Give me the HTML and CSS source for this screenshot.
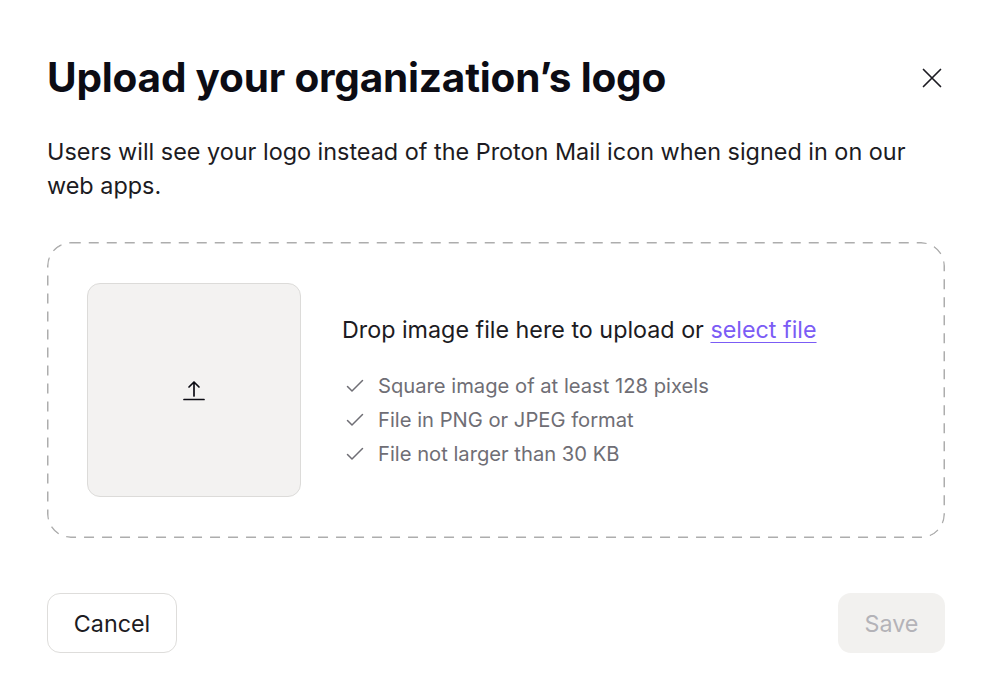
FILE: index.html
```html
<!DOCTYPE html>
<html lang="en">
<head>
<meta charset="utf-8">
<title>Upload your organization’s logo</title>
<link rel="stylesheet" href="styles.css">
</head>
<body>
<div class="modal">
  <header class="modal-header">
    <h1 class="modal-title">Upload your organization’s logo</h1>
    <button class="close-btn" aria-label="Close">
      <svg width="20" height="20" viewBox="0 0 20 20" fill="none" stroke="#1c1b22" stroke-width="1.7" stroke-linecap="round"><path d="M1.5 1.5L18.5 18.5M18.5 1.5L1.5 18.5"/></svg>
    </button>
  </header>
  <p class="modal-desc">Users will see your logo instead of the Proton Mail icon when signed in on our web apps.</p>
  <div class="dropzone">
    <div class="preview">
      <svg width="22" height="22" viewBox="0 0 22 22" fill="none" stroke="#0c0c14" stroke-width="1.7" stroke-linecap="round" stroke-linejoin="round"><path d="M11 17V3M6 8L11 3L16 8M1 20.5H21"/></svg>
    </div>
    <div class="info">
      <p class="drop-text">Drop image file here to upload or <a class="link" href="#">select file</a></p>
      <ul class="checks">
        <li><svg class="check" width="18" height="14" viewBox="0 0 18 14" fill="none" stroke="#6f6e75" stroke-width="1.5" stroke-linecap="round" stroke-linejoin="round"><path d="M1.5 7.5L6 12L16.5 1.5"/></svg>Square image of at least 128 pixels</li>
        <li><svg class="check" width="18" height="14" viewBox="0 0 18 14" fill="none" stroke="#6f6e75" stroke-width="1.5" stroke-linecap="round" stroke-linejoin="round"><path d="M1.5 7.5L6 12L16.5 1.5"/></svg>File in PNG or JPEG format</li>
        <li><svg class="check" width="18" height="14" viewBox="0 0 18 14" fill="none" stroke="#6f6e75" stroke-width="1.5" stroke-linecap="round" stroke-linejoin="round"><path d="M1.5 7.5L6 12L16.5 1.5"/></svg>File not larger than 30 KB</li>
      </ul>
    </div>
  </div>
  <footer class="modal-footer">
    <button class="btn btn-cancel">Cancel</button>
    <button class="btn btn-save" disabled>Save</button>
  </footer>
</div>
</body>
</html>
```
FILE: styles.css
```css
* { box-sizing: border-box; }
html, body { margin: 0; background: #fff; }
body {
  font-family: Inter, "Noto Sans", sans-serif;
  color: #0c0c14;
}
.modal {
  width: 986px;
  height: 698px;
  padding: 52px 41px 0 47px;
}
.modal-header {
  display: flex;
  justify-content: space-between;
  align-items: flex-start;
}
.modal-title {
  margin: 0;
  font-size: 40.5px;
  line-height: 52px;
  font-weight: 700;
  letter-spacing: -0.2px;
}
.close-btn {
  background: none;
  border: 0;
  padding: 0;
  margin-top: 16px;
  margin-right: 3px;
  width: 20px;
  height: 20px;
  display: flex;
}
.modal-desc {
  margin: 31px 0 0;
  font-size: 23.4px;
  line-height: 34px;
  color: #1c1b22;
  max-width: 880px;
}
.dropzone {
  margin-top: 39px;
  width: 898px;
  height: 296px;
  border-radius: 24px;
  background-image: url("data:image/svg+xml;utf8,<svg xmlns='http://www.w3.org/2000/svg' width='898' height='296'><rect x='0.75' y='0.75' width='896.5' height='294.5' rx='23' ry='23' fill='none' stroke='%23adadad' stroke-width='1.5' stroke-dasharray='10 8'/></svg>");
  display: flex;
  align-items: center;
  padding: 0 40px;
  gap: 41px;
}
.preview {
  width: 214px;
  height: 214px;
  flex: none;
  background: #f3f2f1;
  border: 1px solid #dcdbd9;
  border-radius: 13px;
  display: flex;
  align-items: center;
  justify-content: center;
}
.info { padding-top: 4px; }
.drop-text {
  margin: 0;
  font-size: 23.3px;
  line-height: 32px;
  color: #1c1b22;
}
.link {
  color: #7b5cf5;
  text-decoration: underline;
  text-underline-offset: 4px;
  text-decoration-thickness: 1px;
}
.checks {
  list-style: none;
  margin: 23px 0 0;
  padding: 0;
  font-size: 20.2px;
  line-height: 34px;
  color: #6f6e75;
}
.checks li {
  display: flex;
  align-items: center;
}
.check { margin: 0 14px 0 4px; flex: none; }
.modal-footer {
  margin-top: 55px;
  width: 898px;
  display: flex;
  justify-content: space-between;
}
.btn {
  font-family: Inter, "Noto Sans", sans-serif;
  font-size: 23.3px;
  height: 60px;
  border-radius: 13px;
  padding: 0;
}
.btn-cancel {
  background: #fff;
  border: 1.5px solid #dedddb;
  color: #1c1b22;
  width: 130px;
}
.btn-save {
  background: #f2f1ef;
  border: 0;
  color: #b4b3b8;
  width: 107px;
}
```
